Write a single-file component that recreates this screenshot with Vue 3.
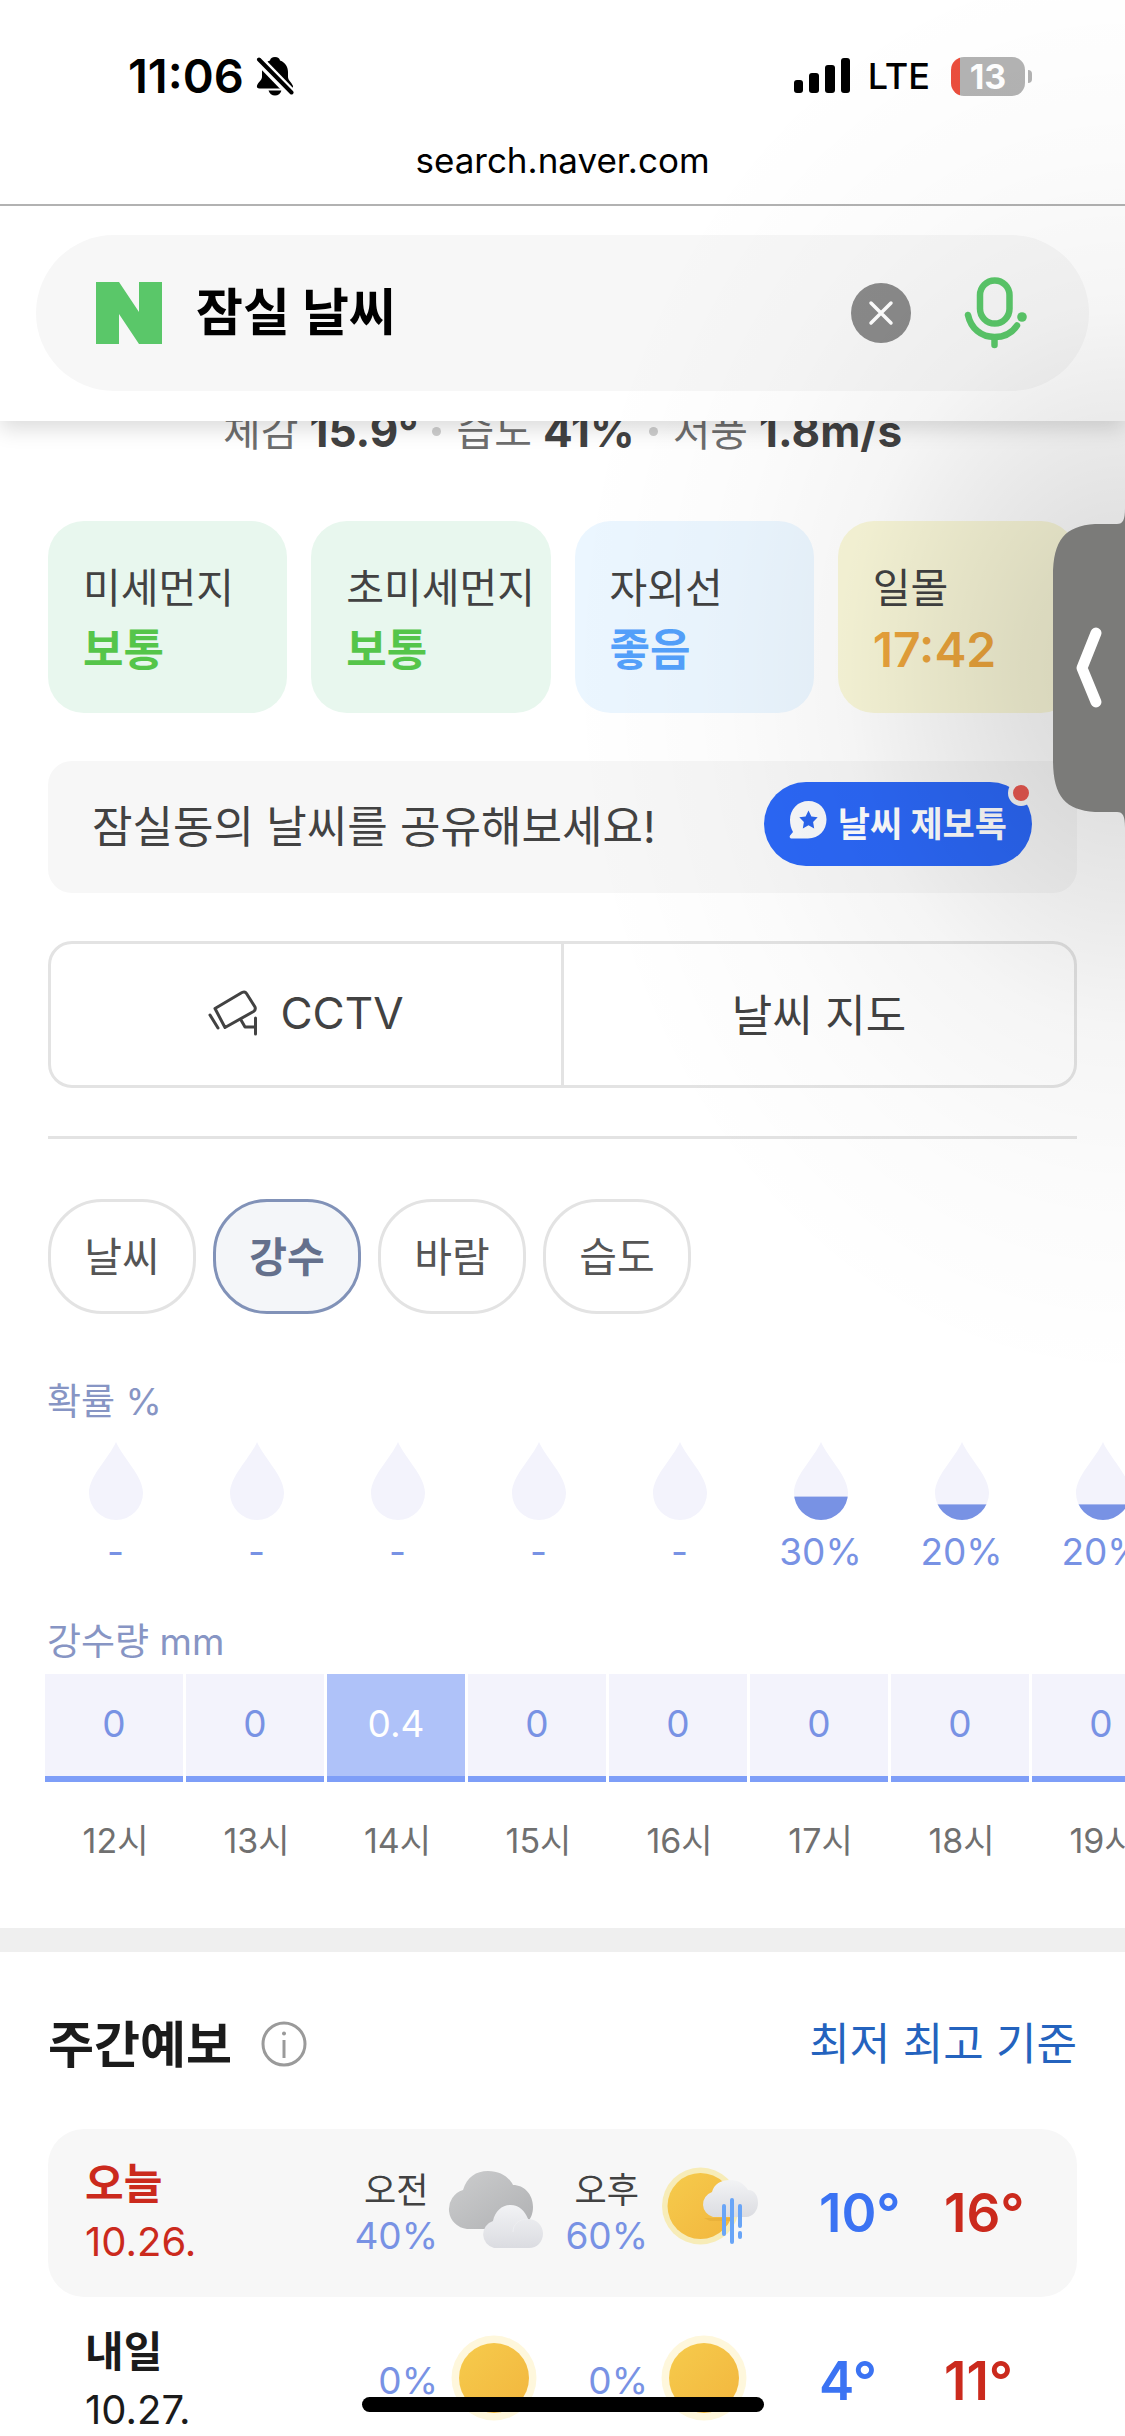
<script setup>
import { ref } from 'vue'

const query = ref('잠실 날씨')
const activeTab = ref('강수')

const stats = [
  { label: '체감', value: '15.9°' },
  { label: '습도', value: '41%' },
  { label: '서풍', value: '1.8m/s' },
]

const cards = [
  { label: '미세먼지', value: '보통', tone: 'green' },
  { label: '초미세먼지', value: '보통', tone: 'green' },
  { label: '자외선', value: '좋음', tone: 'blue' },
  { label: '일몰', value: '17:42', tone: 'yellow' },
]

const tabs = ['날씨', '강수', '바람', '습도']

const hours = [
  { time: 12, chance: 0, amount: 0 },
  { time: 13, chance: 0, amount: 0 },
  { time: 14, chance: 0, amount: 0.4 },
  { time: 15, chance: 0, amount: 0 },
  { time: 16, chance: 0, amount: 0 },
  { time: 17, chance: 30, amount: 0 },
  { time: 18, chance: 20, amount: 0 },
  { time: 19, chance: 20, amount: 0 },
]

const days = [
  {
    name: '오늘', date: '10.26.', today: true, low: 10, high: 16,
    halves: [
      { label: '오전', chance: 40, icon: 'cloudy' },
      { label: '오후', chance: 60, icon: 'shower' },
    ],
  },
  {
    name: '내일', date: '10.27.', today: false, low: 4, high: 11,
    halves: [
      { label: '', chance: 0, icon: 'sunny' },
      { label: '', chance: 0, icon: 'sunny' },
    ],
  },
]
</script>

<template>
  <div class="screen">
    <header class="top">
      <div class="status">
        <div class="status-side">
          <span class="clock">11:06</span>
          <svg class="bell" viewBox="0 0 38 40" width="38" height="40" aria-hidden="true">
            <path d="M19 1c-3 0-4.600 1.500-5 3.500C8.500 6.500 6 11 6 16v5c0 3-4 5.500-5 8.500-.5 2 .5 3 2.500 3h31c2 0 3-1.200 2.300-3C35.500 26.500 32 24 32 21v-5c0-5-2.500-9.500-8-11.500C23.600 2.500 22 1 19 1z" />
            <path d="M12.500 34.500h13c-.8 3-3.500 5-6.500 5s-5.700-2-6.500-5z" />
            <path class="bell-gap" d="M2 3l34 35" />
            <path class="bell-slash" d="M3 3.500l32.500 33" />
          </svg>
        </div>
        <div class="status-side">
          <svg viewBox="0 0 56 36" width="56" height="36" aria-hidden="true">
            <rect x="0" y="22" width="9" height="13" rx="3" />
            <rect x="15" y="15" width="10" height="20" rx="3" />
            <rect x="31" y="7" width="10" height="28" rx="3" />
            <rect x="47" y="0" width="9" height="35" rx="3" />
          </svg>
          <span class="carrier">LTE</span>
          <span class="battery"><span class="battery-body">13</span><span class="battery-nub"></span></span>
        </div>
      </div>
      <div class="address">search.naver.com</div>
      <form class="search" role="search" @submit.prevent>
        <div class="search-box">
          <svg class="logo" viewBox="0 0 66 62" width="66" height="62" aria-label="NAVER">
            <path d="M0 0h23l20 30V0h23v62H43L23 32v30H0z" />
          </svg>
          <input v-model="query" class="search-input" type="text" aria-label="검색어">
          <button class="icon-button" type="button" aria-label="지우기">
            <svg viewBox="0 0 60 60" width="60" height="60">
              <circle cx="30" cy="30" r="30" fill="#8a8a8a" />
              <path d="M20 20l20 20M40 20L20 40" stroke="#fff" stroke-width="3.500" stroke-linecap="round" />
            </svg>
          </button>
          <button class="icon-button" type="button" aria-label="음성 검색">
            <svg viewBox="0 0 64 74" width="64" height="74" fill="none" stroke="#5ac769" stroke-width="6.500" stroke-linecap="round">
              <rect x="16" y="4.500" width="29.500" height="43" rx="14.700" />
              <path d="M4 39c3 13.500 13 22 26.500 22 9.500 0 17.500-4 22.500-11.500" />
              <path d="M30.500 62v7" />
              <circle cx="58" cy="41" r="4.800" fill="#5ac769" stroke="none" />
            </svg>
          </button>
        </div>
      </form>
    </header>

    <main class="content">
      <section class="now">
        <dl class="stats">
          <div v-for="s in stats" :key="s.label" class="stat">
            <dt>{{ s.label }}</dt>
            <dd>{{ s.value }}</dd>
          </div>
        </dl>

        <div class="cards">
          <a v-for="c in cards" :key="c.label" href="#" class="card" :class="c.tone">
            <span class="card-label">{{ c.label }}</span>
            <strong class="card-value">{{ c.value }}</strong>
          </a>
        </div>

        <div class="talk">
          <p class="talk-text">잠실동의 날씨를 공유해보세요!</p>
          <a href="#" class="talk-link">
            <svg viewBox="0 0 38 38" width="38" height="38" aria-hidden="true">
              <path fill="#f8f9fb" d="M19.500 0C30 0 37.500 8 37.500 18.500S30 37.500 19 37.500H3c-2.500 0-3-2-1.500-3.500l2.500-3C2 27.500 1 23.500 1 19 1 8 9 0 19.500 0z" />
              <path fill="#2a64ee" d="M19.500 9.500l2.900 6 6.300.8-4.600 4.600 1.100 6.500-5.700-3.100-5.700 3.100 1.100-6.500-4.600-4.600 6.300-.8z" />
            </svg>
            <span class="talk-label">날씨 제보톡</span>
            <i class="talk-badge"></i>
          </a>
        </div>

        <nav class="links">
          <a href="#" class="link">
            <svg viewBox="0 0 50 46" width="50" height="46" fill="none" stroke="#424242" stroke-width="3" stroke-linejoin="round" stroke-linecap="round" aria-hidden="true">
              <path d="M7 18.500L34 2.500q3-1.500 4.500 1L47 17q1 3-1.500 4.500L17 37.500z" />
              <path d="M2 25l8 13M33 30l4 7h10M47.500 28v16" />
            </svg>
            <span>CCTV</span>
          </a>
          <a href="#" class="link">날씨 지도</a>
        </nav>

        <hr class="rule">

        <div class="tabs">
          <button
            v-for="t in tabs" :key="t" type="button" class="tab"
            :class="{ active: t === activeTab }" @click="activeTab = t"
          >{{ t }}</button>
        </div>
      </section>

      <section class="hourly">
        <table class="hours">
          <tbody>
            <tr><th class="hours-title" :colspan="hours.length" scope="colgroup">확률 %</th></tr>
            <tr>
              <td v-for="h in hours" :key="h.time" class="chance">
                <svg class="drop" viewBox="0 0 54 78" width="54" height="78" aria-hidden="true">
                  <defs>
                    <clipPath :id="'drop' + h.time">
                      <path d="M27 0C34 16 54 34 54 51A27 27 0 0 1 0 51C0 34 20 16 27 0z" />
                    </clipPath>
                  </defs>
                  <g :clip-path="`url(#drop${h.time})`">
                    <rect width="54" height="78" fill="#f3f3fc" />
                    <rect width="54" height="78" :y="78 - 78 * h.chance / 100" fill="#7892e4" />
                  </g>
                </svg>
                {{ h.chance ? h.chance + '%' : '-' }}
              </td>
            </tr>
            <tr><th class="hours-title amount-title" :colspan="hours.length" scope="colgroup">강수량 mm</th></tr>
            <tr>
              <td v-for="h in hours" :key="h.time" class="amount">
                <div class="amount-cell" :class="{ wet: h.amount > 0 }">{{ h.amount }}</div>
              </td>
            </tr>
            <tr>
              <th v-for="h in hours" :key="h.time" class="time" scope="col">{{ h.time }}시</th>
            </tr>
          </tbody>
        </table>
      </section>

      <section class="weekly">
        <div class="weekly-head">
          <h2>주간예보</h2>
          <button class="icon-button info" type="button" aria-label="안내">
            <svg viewBox="0 0 46 46" width="46" height="46" fill="none" stroke="#9a9a9a" stroke-width="3">
              <circle cx="23" cy="23" r="21" />
              <path d="M23 19v18" />
              <circle cx="23" cy="12.500" r="2" fill="#9a9a9a" stroke="none" />
            </svg>
          </button>
          <a href="#" class="basis">최저 최고 기준</a>
        </div>
        <ul class="days">
          <li v-for="d in days" :key="d.date" class="day" :class="{ today: d.today }">
            <div class="day-name">
              <strong>{{ d.name }}</strong>
              <span>{{ d.date }}</span>
            </div>
            <div v-for="(half, i) in d.halves" :key="i" class="half">
              <div class="half-text">
                <span v-if="half.label" class="half-label">{{ half.label }}</span>
                <span class="half-chance">{{ half.chance }}%</span>
              </div>
              <svg class="weather" viewBox="0 0 108 96" width="108" height="96" aria-hidden="true">
                <defs>
                  <linearGradient id="sunFill" x1="0" y1="0" x2="1" y2="1">
                    <stop offset="0" stop-color="#f6cb4c" /><stop offset="1" stop-color="#f2b63e" />
                  </linearGradient>
                  <linearGradient id="greyFill" x1="0" y1="0" x2="1" y2="1">
                    <stop offset="0" stop-color="#cccdce" /><stop offset="1" stop-color="#b0b1b3" />
                  </linearGradient>
                  <linearGradient id="paleFill" x1="0" y1="0" x2="0" y2="1">
                    <stop offset="0" stop-color="#f2f3f5" /><stop offset="1" stop-color="#dbdce1" />
                  </linearGradient>
                </defs>
                <template v-if="half.icon === 'cloudy'">
                  <path fill="url(#greyFill)" d="M27 64a20 20 0 0 1-4-39C27 12 36 6 48 6s21 6 25 14c11 0 20 9 20 22s-9 22-20 22z" />
                  <path fill="url(#paleFill)" d="M54 83a14 14 0 0 1-1-27c2-10 9-16 17.500-16S85 46 88 54c8 0 15 6 15 14.500S97 83 89 83z" />
                  <path fill="none" stroke="#eeeff2" stroke-width="1" d="M73 67c0-8 6-13 15-13" />
                </template>
                <template v-else-if="half.icon === 'shower'">
                  <circle cx="50.500" cy="41" r="38.500" fill="#f7ecb8" />
                  <circle cx="50.500" cy="41" r="33" fill="url(#sunFill)" />
                  <path fill="#d89a2c" opacity=".3" d="M54 53h27v2q0 1-1 1H60z" />
                  <path fill="url(#paleFill)" d="M63 52a13 13 0 0 1-1-25c2-8 9-12 18-12s14 4 18 10c7 0 10 6 10 13s-5 14-12 14z" />
                  <path fill="none" stroke="#69a5f7" stroke-width="4" stroke-linecap="round" d="M74 41v28M82 35v42M90 41v20M90 68v4" />
                </template>
                <template v-else>
                  <circle cx="54" cy="45" r="42.500" fill="#fef7dc" />
                  <circle cx="54" cy="45" r="35" fill="url(#sunFill)" />
                </template>
              </svg>
            </div>
            <div class="temps">
              <span class="low">{{ d.low }}°</span>
              <span class="high">{{ d.high }}°</span>
            </div>
          </li>
        </ul>
      </section>
    </main>

    <div class="shade"></div>
    <button class="side-tab" type="button" aria-label="패널 열기">
      <svg viewBox="0 0 72 320" width="72" height="320">
        <path fill="#7b7b79" d="M72 0c0 12-2 16-8 16H42C12 18 0 32 0 68v184c0 36 12 50 42 52h22c6 0 8 4 8 16z" />
        <path fill="none" stroke="#fff" stroke-width="11" stroke-linecap="round" stroke-linejoin="round" d="M43 125L29 160l14 34" />
      </svg>
    </button>
    <div class="home-bar"></div>
  </div>
</template>

<style>
body {
  margin: 0;
  background: #fff;
}
</style>

<style scoped>
.screen {
  position: relative;
  height: 100vh;
  overflow: hidden;
  background: #fff;
  color: #424242;
  font-family: Inter, "Noto Sans CJK KR", sans-serif;
  font-size: 44px;
}
a {
  color: inherit;
  text-decoration: none;
}
button {
  margin: 0;
  padding: 0;
  border: 0;
  background: none;
  color: inherit;
  font: inherit;
}
svg {
  display: block;
  flex: none;
}

/* header */
.top {
  position: relative;
  z-index: 1;
  background: #fff;
  color: #000;
  box-shadow: 0 8px 20px rgba(0, 0, 0, .14);
}
.status {
  display: flex;
  justify-content: space-between;
  align-items: center;
  height: 88px;
  padding: 32px 93px 0 128px;
}
.status-side {
  display: flex;
  align-items: center;
}
.clock {
  font-size: 47px;
  font-weight: 600;
  line-height: 56px;
}
.bell {
  margin-left: 12px;
}
.bell-gap {
  fill: none;
  stroke: #fff;
  stroke-width: 10;
}
.bell-slash {
  fill: none;
  stroke: #000;
  stroke-width: 4;
  stroke-linecap: round;
}
.carrier {
  margin: 0 21px 0 18px;
  font-size: 36px;
  font-weight: 500;
  line-height: 56px;
}
.battery {
  display: flex;
  align-items: center;
  gap: 3px;
}
.battery-body {
  width: 74px;
  height: 39px;
  border-radius: 13px;
  background: linear-gradient(90deg, #eb4e3d 9px, #b3b3b3 9px);
  color: #fff;
  font-size: 34px;
  font-weight: 700;
  line-height: 39px;
  text-align: center;
}
.battery-nub {
  width: 4px;
  height: 13px;
  border-radius: 0 6px 6px 0;
  background: #b3b3b3;
}
.address {
  height: 84px;
  border-bottom: 2px solid #b2b2b2;
  font-size: 35px;
  line-height: 80px;
  text-align: center;
}
.search {
  padding: 29px 36px 30px;
}
.search-box {
  display: flex;
  align-items: center;
  height: 156px;
  padding: 0 61px 0 60px;
  border-radius: 78px;
  background: #f7f7f7;
  box-sizing: border-box;
}
.logo {
  fill: #5ac769;
}
.search-input {
  flex: 1;
  min-width: 0;
  margin: 0 24px 0 34px;
  padding: 0;
  border: 0;
  outline: 0;
  background: none;
  color: #000;
  font: 700 51px/72px Inter, "Noto Sans CJK KR", sans-serif;
}
.icon-button + .icon-button {
  margin-left: 53px;
}

/* current conditions */
.content {
  margin-top: -20px;
}
.now {
  padding: 0 48px;
}
.stats {
  display: flex;
  justify-content: center;
  margin: 0 0 60px;
}
.stat {
  display: flex;
  align-items: center;
  gap: 11px;
  line-height: 60px;
}
.stat + .stat::before {
  content: "";
  width: 9px;
  height: 9px;
  margin: 0 4px 0 14px;
  border-radius: 5px;
  background: #cfcfcf;
}
.stat dt {
  color: #6e6e6e;
  font-size: 41px;
}
.stat dd {
  margin: 0;
  font-size: 44px;
  font-weight: 700;
}
.cards {
  display: grid;
  grid-template-columns: repeat(4, minmax(0, 1fr));
  gap: 24px;
}
.card {
  display: flex;
  flex-direction: column;
  height: 192px;
  padding: 36px 0 0 35px;
  border-radius: 36px;
  box-sizing: border-box;
  white-space: nowrap;
}
.card-label {
  font-size: 41px;
  line-height: 62px;
}
.card-value {
  font-size: 44px;
  line-height: 62px;
}
.green {
  background: #e8f7ee;
}
.green .card-value {
  color: #55c54a;
}
.blue {
  background: #ebf6ff;
}
.blue .card-value {
  color: #53a0fb;
}
.yellow {
  background: #faf8d9;
}
.yellow .card-value {
  color: #eea63c;
  font-size: 48px;
  font-weight: 600;
}
.talk {
  display: flex;
  align-items: center;
  justify-content: space-between;
  height: 132px;
  margin: 48px 0;
  padding: 0 45px 6px 44px;
  border-radius: 24px;
  background: #f7f7f7;
  box-sizing: border-box;
}
.talk-text {
  margin: 0;
}
.talk-link {
  position: relative;
  display: flex;
  align-items: center;
  gap: 11px;
  height: 84px;
  padding: 0 25px;
  border-radius: 42px;
  background: #2b67f6;
  color: #fff;
  font-size: 35px;
  font-weight: 700;
}
.talk-link svg {
  margin-bottom: 8px;
}
.talk-label {
  padding-bottom: 6px;
}
.talk-badge {
  position: absolute;
  top: -2px;
  right: -2px;
  width: 16px;
  height: 16px;
  border: 5px solid #f7f7f7;
  border-radius: 50%;
  background: #e85850;
}
.links {
  display: flex;
  height: 147px;
  border: 3px solid #e3e3e3;
  border-radius: 24px;
  box-sizing: border-box;
}
.link {
  display: flex;
  flex: 1;
  align-items: center;
  justify-content: center;
  gap: 22px;
  padding-bottom: 4px;
}
.link + .link {
  border-left: 3px solid #e3e3e3;
}
.rule {
  height: 3px;
  margin: 48px 0 60px;
  border: 0;
  background: #e3e3e3;
}
.tabs {
  display: flex;
  gap: 17px;
}
.tab {
  width: 148px;
  height: 115px;
  padding-bottom: 6px;
  border: 3px solid #e3e3e3;
  border-radius: 54px;
  color: #555;
  font-size: 41px;
}
.tab.active {
  border-color: #8192b8;
  background: #f4f6f9;
  color: #64708c;
  font-weight: 700;
}

/* hourly rain */
.hourly {
  margin-top: 60px;
  padding-left: 45px;
  overflow: hidden;
}
.hours {
  width: 1128px;
  border-collapse: collapse;
  table-layout: fixed;
}
.hours th,
.hours td {
  padding: 0;
  font-weight: 400;
}
.hours .hours-title {
  padding-left: 2px;
  color: #8795c4;
  font-size: 37px;
  line-height: 56px;
  text-align: left;
}
.hours .amount-title {
  padding-bottom: 4px;
}
.hours .chance {
  padding: 12px 0 38px;
  color: #7892e4;
  font-size: 37px;
  line-height: 48px;
  text-align: center;
}
.drop {
  margin: 0 auto 8px;
}
.amount-cell {
  height: 108px;
  margin-right: 3px;
  border-bottom: 6px solid #7e9ef8;
  background: #f3f3fc;
  box-sizing: border-box;
  color: #7892e4;
  font-size: 37px;
  line-height: 100px;
  text-align: center;
}
.amount-cell.wet {
  background: #afc2f9;
  color: #fff;
}
.hours .time {
  padding: 35px 0 63px;
  color: #707070;
  font-size: 34px;
  line-height: 48px;
}

/* weekly forecast */
.weekly {
  padding: 57px 48px 0;
  border-top: 24px solid #efefef;
}
.weekly-head {
  display: flex;
  align-items: center;
  height: 64px;
  margin-bottom: 56px;
}
.weekly-head h2 {
  margin: 0;
  color: #1b1b1b;
  font-size: 50px;
  font-weight: 700;
}
.info {
  margin: 6px 0 0 29px;
}
.basis {
  margin-left: auto;
  color: #2463be;
}
.days {
  margin: 0;
  padding: 0;
  list-style: none;
}
.day {
  display: flex;
  align-items: center;
  height: 168px;
  padding-left: 37px;
  border-radius: 36px;
  color: #1b1b1b;
}
.today {
  background: #f7f7f7;
}
.day-name {
  display: flex;
  flex: 1;
  flex-direction: column;
  font-size: 40px;
  line-height: 58px;
}
.day-name strong {
  font-size: 42px;
}
.today .day-name {
  color: #cb2a1d;
}
.half {
  display: flex;
  align-items: center;
  justify-content: flex-end;
  gap: 2px;
  width: 210px;
}
.half-text {
  display: flex;
  flex-direction: column;
  align-items: center;
  line-height: 46px;
}
.half-label {
  color: #424242;
  font-size: 35px;
}
.half-chance {
  color: #7892e4;
  font-size: 37px;
}
.temps {
  display: flex;
  margin-left: 61px;
  font-size: 53px;
  font-weight: 600;
}
.low {
  width: 125px;
  color: #3b73f3;
}
.high {
  width: 133px;
  color: #cb2a1d;
}

/* overlays */
.shade {
  position: absolute;
  inset: 0;
  z-index: 2;
  background: radial-gradient(560px 720px at 100% 668px, rgba(0, 0, 0, .15), rgba(0, 0, 0, .12) 18%, rgba(0, 0, 0, .085) 32%, rgba(0, 0, 0, .04) 50%, rgba(0, 0, 0, .015) 72%, rgba(0, 0, 0, 0));
  pointer-events: none;
}
.side-tab {
  position: absolute;
  top: 508px;
  right: 0;
  z-index: 3;
}
.home-bar {
  position: absolute;
  bottom: 24px;
  left: 50%;
  z-index: 3;
  width: 402px;
  height: 15px;
  margin-left: -201px;
  border-radius: 8px;
  background: #000;
}
</style>
